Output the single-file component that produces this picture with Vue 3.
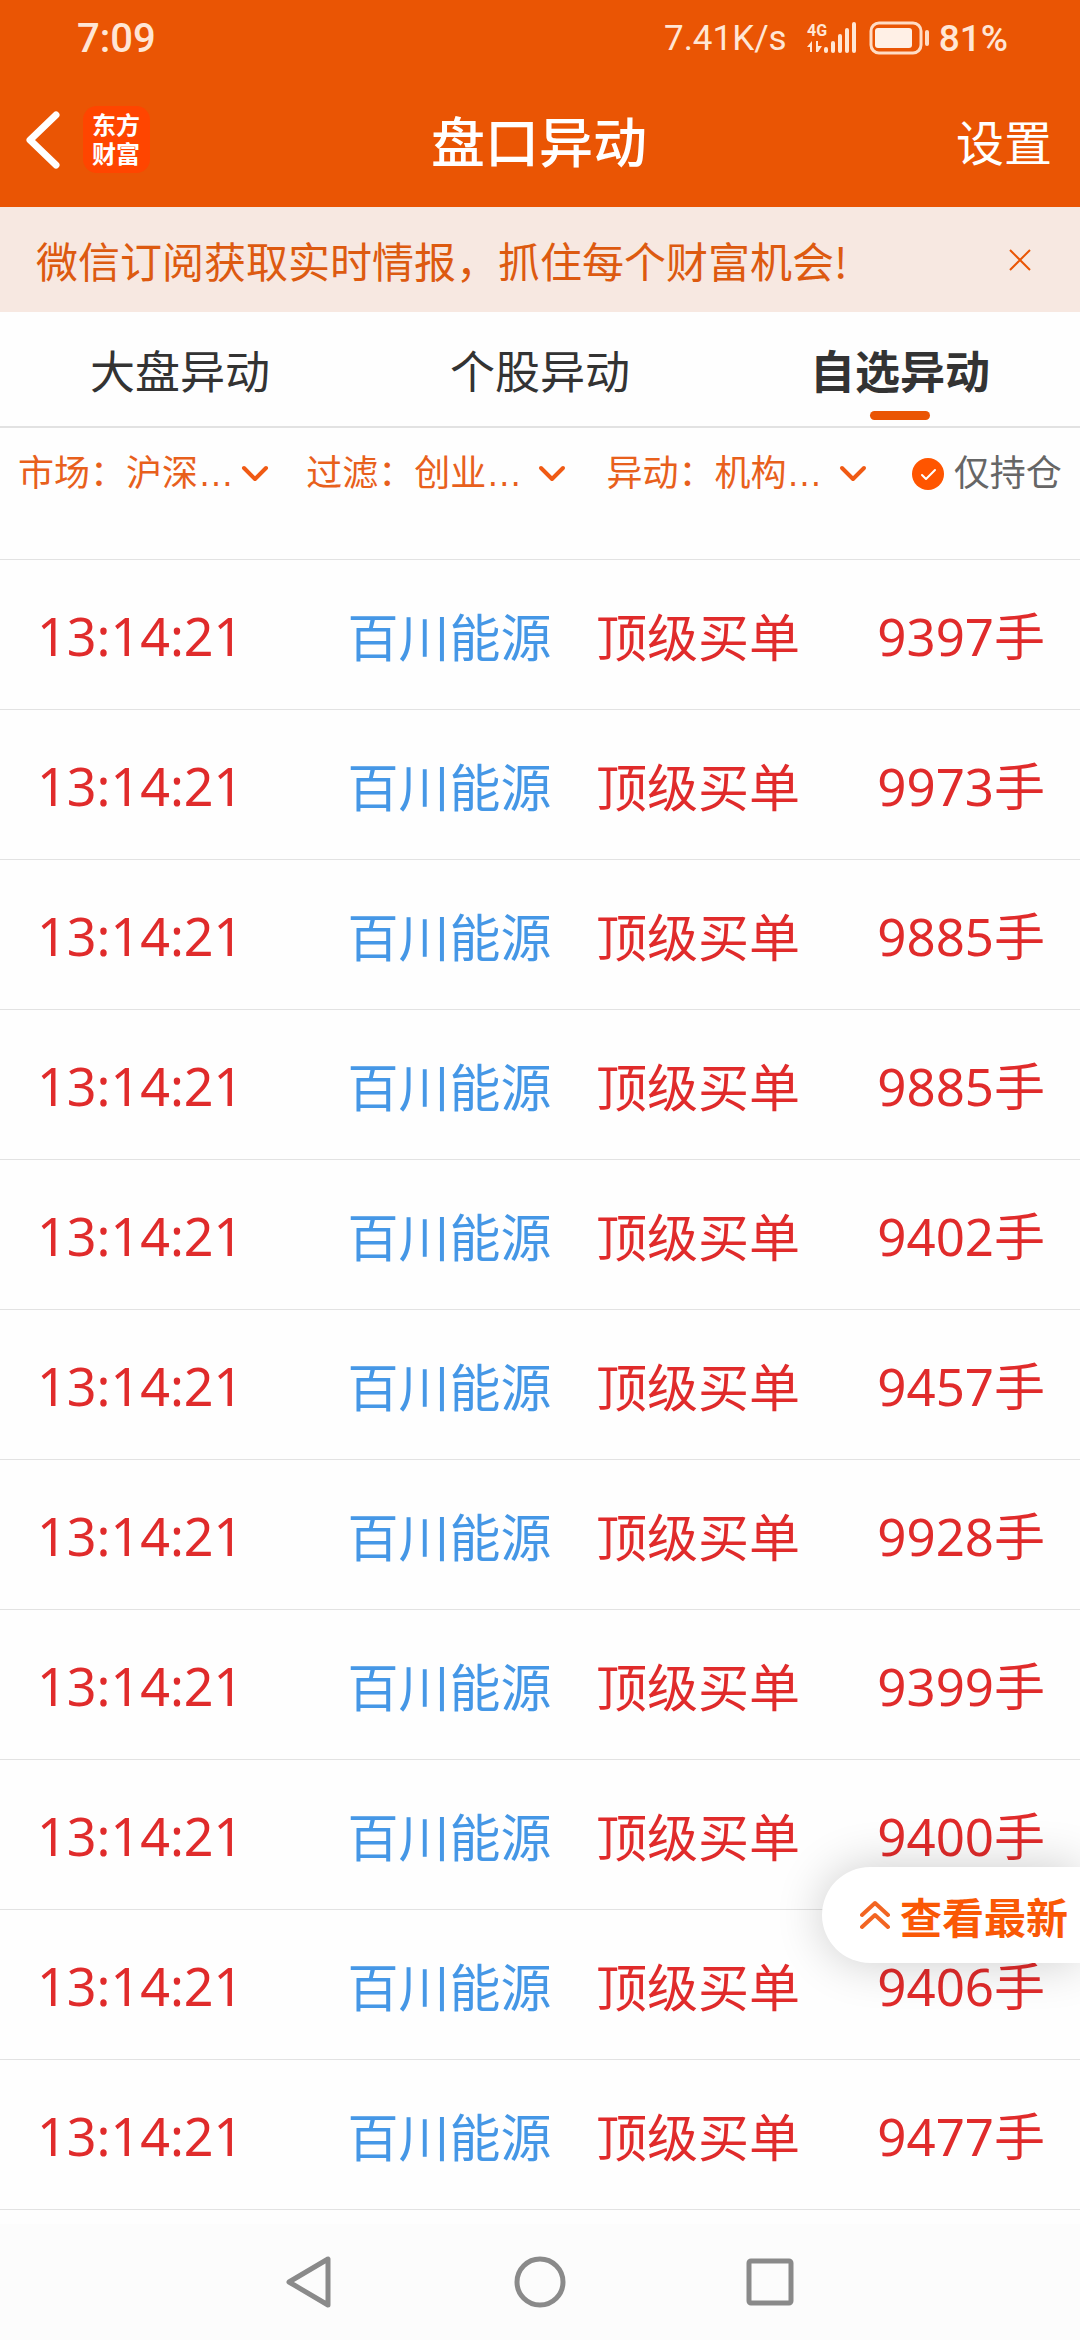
<script setup>
import { ref } from 'vue'

const tabs = ['大盘异动', '个股异动', '自选异动']
const activeTab = ref(2)

const filters = [
  { id: 'market', label: '市场：', value: '沪深…', compact: true },
  { id: 'exclude', label: '过滤：', value: '创业…' },
  { id: 'change', label: '异动：', value: '机构…' }
]

const onlyHolding = ref(true)
const showNotice = ref(true)

const volumes = [9397, 9973, 9885, 9885, 9402, 9457, 9928, 9399, 9400, 9406, 9477]
const rows = volumes.map((volume, i) => ({
  id: i,
  time: '13:14:21',
  name: '百川能源',
  type: '顶级买单',
  volume
}))

function scrollToTop() {
  window.scrollTo({ top: 0, behavior: 'smooth' })
}
</script>

<template>
  <div class="page">
    <header class="top">
      <div class="status">
        <span class="clock">7:09</span>
        <div class="indicators">
          <span class="speed">7.41K/s</span>
          <svg class="signal" width="50" height="34" viewBox="0 0 50 34">
            <text x="0" y="15" class="network">4G</text>
            <path d="M0 26 L5 20 V31 H3 V26 Z M9 20 H11 V25 H15 L11 31 H9 Z" />
            <rect x="17" y="26" width="4" height="6" rx="2" />
            <rect x="24" y="20" width="4" height="12" rx="2" />
            <rect x="31" y="13" width="4" height="19" rx="2" />
            <rect x="38" y="7" width="4" height="25" rx="2" />
            <rect x="45" y="1" width="4" height="31" rx="2" />
          </svg>
          <svg class="battery" width="60" height="34" viewBox="0 0 60 34">
            <rect x="2" y="2" width="50" height="30" rx="8" fill="none" stroke="#ffdcc5" stroke-width="3" />
            <rect x="6" y="7" width="37" height="20" rx="3" fill="#fff0e6" />
            <rect x="56" y="9" width="4" height="16" rx="2" fill="#ffdcc5" />
          </svg>
          <span class="percent">81%</span>
        </div>
      </div>

      <div class="titlebar">
        <div class="left">
          <button class="back" aria-label="返回">
            <svg width="34" height="58" viewBox="0 0 34 58">
              <path d="M30 4 L4 29 L30 54" fill="none" stroke="#fff" stroke-width="7" stroke-linecap="round" stroke-linejoin="round" />
            </svg>
          </button>
          <div class="logo">东方财富</div>
        </div>
        <h1>盘口异动</h1>
        <button class="settings">设置</button>
      </div>
    </header>

    <div v-if="showNotice" class="notice">
      <a href="#">微信订阅获取实时情报，抓住每个财富机会!</a>
      <button class="close" aria-label="关闭" @click="showNotice = false">
        <svg width="24" height="24" viewBox="0 0 24 24">
          <path d="M2 2 L22 22 M22 2 L2 22" stroke="#ea5504" stroke-width="2" />
        </svg>
      </button>
    </div>

    <nav class="tabs">
      <button
        v-for="(tab, i) in tabs"
        :key="tab"
        :class="{ active: i === activeTab }"
        @click="activeTab = i"
      >
        {{ tab }}
      </button>
    </nav>

    <div class="filters">
      <div v-for="f in filters" :key="f.id" class="filter" :class="{ compact: f.compact }">
        <label :for="f.id">{{ f.label }}</label>
        <select :id="f.id">
          <option>{{ f.value }}</option>
        </select>
        <svg width="28" height="18" viewBox="0 0 28 18">
          <path d="M3 3 L14 14 L25 3" fill="none" stroke="#f05a14" stroke-width="4" stroke-linecap="round" stroke-linejoin="round" />
        </svg>
      </div>
      <label class="holding">
        <span class="check">
          <input v-model="onlyHolding" type="checkbox">
          <svg width="32" height="32" viewBox="0 0 32 32">
            <path d="M10 17 L14 21 L23 12" fill="none" stroke="#fff" stroke-width="2" stroke-linecap="round" stroke-linejoin="round" />
          </svg>
        </span>
        仅持仓
      </label>
    </div>

    <main class="list">
      <table>
        <colgroup>
          <col class="col-time">
          <col class="col-name">
          <col class="col-type">
          <col class="col-volume">
        </colgroup>
        <tbody>
          <tr v-for="row in rows" :key="row.id">
            <td class="time"><span class="num">{{ row.time }}</span></td>
            <td class="name">{{ row.name }}</td>
            <td>{{ row.type }}</td>
            <td class="volume"><span class="num">{{ row.volume }}</span>手</td>
          </tr>
        </tbody>
      </table>

      <button class="latest" @click="scrollToTop">
        <svg width="30" height="30" viewBox="0 0 30 30">
          <path d="M2 15 L15 3 L28 15 M2 27 L15 15 L28 27" fill="none" stroke="#f26522" stroke-width="4" stroke-linejoin="round" stroke-linecap="round" />
        </svg>
        查看最新
      </button>
    </main>

    <footer class="sysnav">
      <button aria-label="返回">
        <svg width="52" height="52" viewBox="0 0 52 52">
          <path d="M5 26 L44 3 V49 Z" />
        </svg>
      </button>
      <button aria-label="主页">
        <svg width="52" height="52" viewBox="0 0 52 52">
          <circle cx="26" cy="26" r="23" />
        </svg>
      </button>
      <button aria-label="最近任务">
        <svg width="52" height="52" viewBox="0 0 52 52">
          <rect x="5" y="5" width="42" height="42" rx="2" />
        </svg>
      </button>
    </footer>
  </div>
</template>

<style>
body {
  background: #fefefe;
}
</style>

<style scoped>
/* General */
.page {
  min-height: 100vh;
  display: flex;
  flex-direction: column;
  background: #fefefe;
  font-family: "Noto Sans CJK SC", sans-serif;
}
button {
  padding: 0;
  border: none;
  background: none;
  font: inherit;
  color: inherit;
  cursor: pointer;
}
svg {
  display: block;
  flex: none;
}

/* Header */
.top {
  background: #ea5504;
  color: #fff;
}
.status {
  height: 72px;
  padding: 4px 72px 0 77px;
  box-sizing: border-box;
  display: flex;
  align-items: center;
  justify-content: space-between;
  font-family: Roboto, sans-serif;
  color: #ffe6d5;
}
.clock {
  font-size: 40px;
  font-weight: 500;
}
.indicators {
  display: flex;
  align-items: center;
}
.speed {
  font-size: 35px;
  margin-right: 20px;
}
.signal {
  fill: #ffe6d5;
  overflow: visible;
}
.network {
  font-size: 16px;
  font-weight: 700;
}
.battery {
  margin: 0 10px 0 12px;
}
.percent {
  font-size: 37px;
  font-weight: 500;
}
.titlebar {
  height: 135px;
  padding: 0 28px 0 26px;
  display: grid;
  grid-template-columns: 1fr auto 1fr;
  align-items: center;
}
.left {
  display: flex;
  align-items: center;
  gap: 23px;
}
.logo {
  width: 67px;
  height: 67px;
  padding: 3px 9px 0;
  box-sizing: border-box;
  border-radius: 14px;
  background: #ff4500;
  font-size: 24px;
  font-weight: 700;
  line-height: 29px;
  word-break: break-all;
}
.titlebar h1 {
  margin: 0;
  font-size: 54px;
  font-weight: 500;
}
.settings {
  justify-self: end;
  font-size: 48px;
}

/* Notice */
.notice {
  height: 105px;
  padding: 0 48px 0 36px;
  display: flex;
  align-items: center;
  justify-content: space-between;
  background: #f7e8e1;
}
.notice a {
  font-size: 42px;
  color: #dd5a10;
  text-decoration: none;
}

/* Tabs */
.tabs {
  height: 114px;
  display: grid;
  grid-template-columns: repeat(3, 1fr);
  border-bottom: 2px solid #e2e2e2;
}
.tabs button {
  position: relative;
  font-size: 45px;
  color: #333;
}
.tabs .active {
  font-weight: 700;
}
.tabs .active::after {
  content: "";
  position: absolute;
  left: 50%;
  bottom: 6px;
  width: 60px;
  height: 9px;
  margin-left: -30px;
  border-radius: 5px;
  background: #ea5504;
}

/* Filters */
.filters {
  height: 132px;
  padding: 0 16px 0 18px;
  box-sizing: border-box;
  border-bottom: 1px solid #e2e2e2;
  display: grid;
  grid-template-columns: 288fr 300fr 305fr 152fr;
  align-items: start;
  font-family: "Liberation Sans", "Noto Sans CJK SC", sans-serif;
  font-size: 36px;
  line-height: 92px;
  color: #e8601c;
  white-space: nowrap;
}
.filter {
  display: flex;
  align-items: center;
}
.filter svg {
  margin-left: 16px;
}
.filter.compact svg {
  margin-left: 7px;
}
.filter select {
  appearance: none;
  width: 108px;
  height: 92px;
  padding: 0;
  border: none;
  background: none;
  font: inherit;
  color: inherit;
}
.holding {
  display: flex;
  align-items: center;
  gap: 10px;
  color: #666;
}
.check {
  display: grid;
}
.check input,
.check svg {
  grid-area: 1 / 1;
}
.check input {
  appearance: none;
  width: 32px;
  height: 32px;
  margin: 0;
  border-radius: 50%;
  background: #ccc;
}
.check input:checked {
  background: #ff5500;
}
.check svg {
  position: relative;
  pointer-events: none;
}

/* List */
.list {
  position: relative;
  flex: 1;
  padding-bottom: 14px;
}
table {
  width: 100%;
  table-layout: fixed;
  border-collapse: separate;
  border-spacing: 0;
  font-size: 51px;
  color: #e02b2b;
}
.col-time {
  width: 32%;
}
.col-name {
  width: 23%;
}
.col-type {
  width: 22%;
}
.col-volume {
  width: 23%;
}
td {
  height: 149px;
  padding: 0 0 0 2px;
  border-bottom: 1px solid #e2e2e2;
  line-height: 74px;
  white-space: nowrap;
}
.num {
  font-family: "Noto Sans", sans-serif;
  font-size: 52px;
}
.time {
  padding-left: 37px;
}
.name {
  color: #4597e6;
}
.volume {
  padding-right: 35px;
  text-align: right;
}
.volume .num {
  font-size: 51px;
}
.latest {
  position: absolute;
  right: 0;
  bottom: 261px;
  height: 96px;
  padding: 0 12px 0 38px;
  display: flex;
  align-items: center;
  gap: 10px;
  border-radius: 48px 0 0 48px;
  background: #fff;
  box-shadow: 0 0 48px rgba(0, 0, 0, 0.2);
  font-size: 42px;
  font-weight: 700;
  color: #fa5805;
}

/* System navigation */
.sysnav {
  height: 116px;
  padding: 0 18%;
  display: flex;
  background: #fcfcfc;
}
.sysnav button {
  flex: 1;
  display: flex;
  align-items: center;
  justify-content: center;
}
.sysnav svg {
  fill: none;
  stroke: #8a8a8a;
  stroke-width: 5;
  stroke-linejoin: round;
}
</style>
